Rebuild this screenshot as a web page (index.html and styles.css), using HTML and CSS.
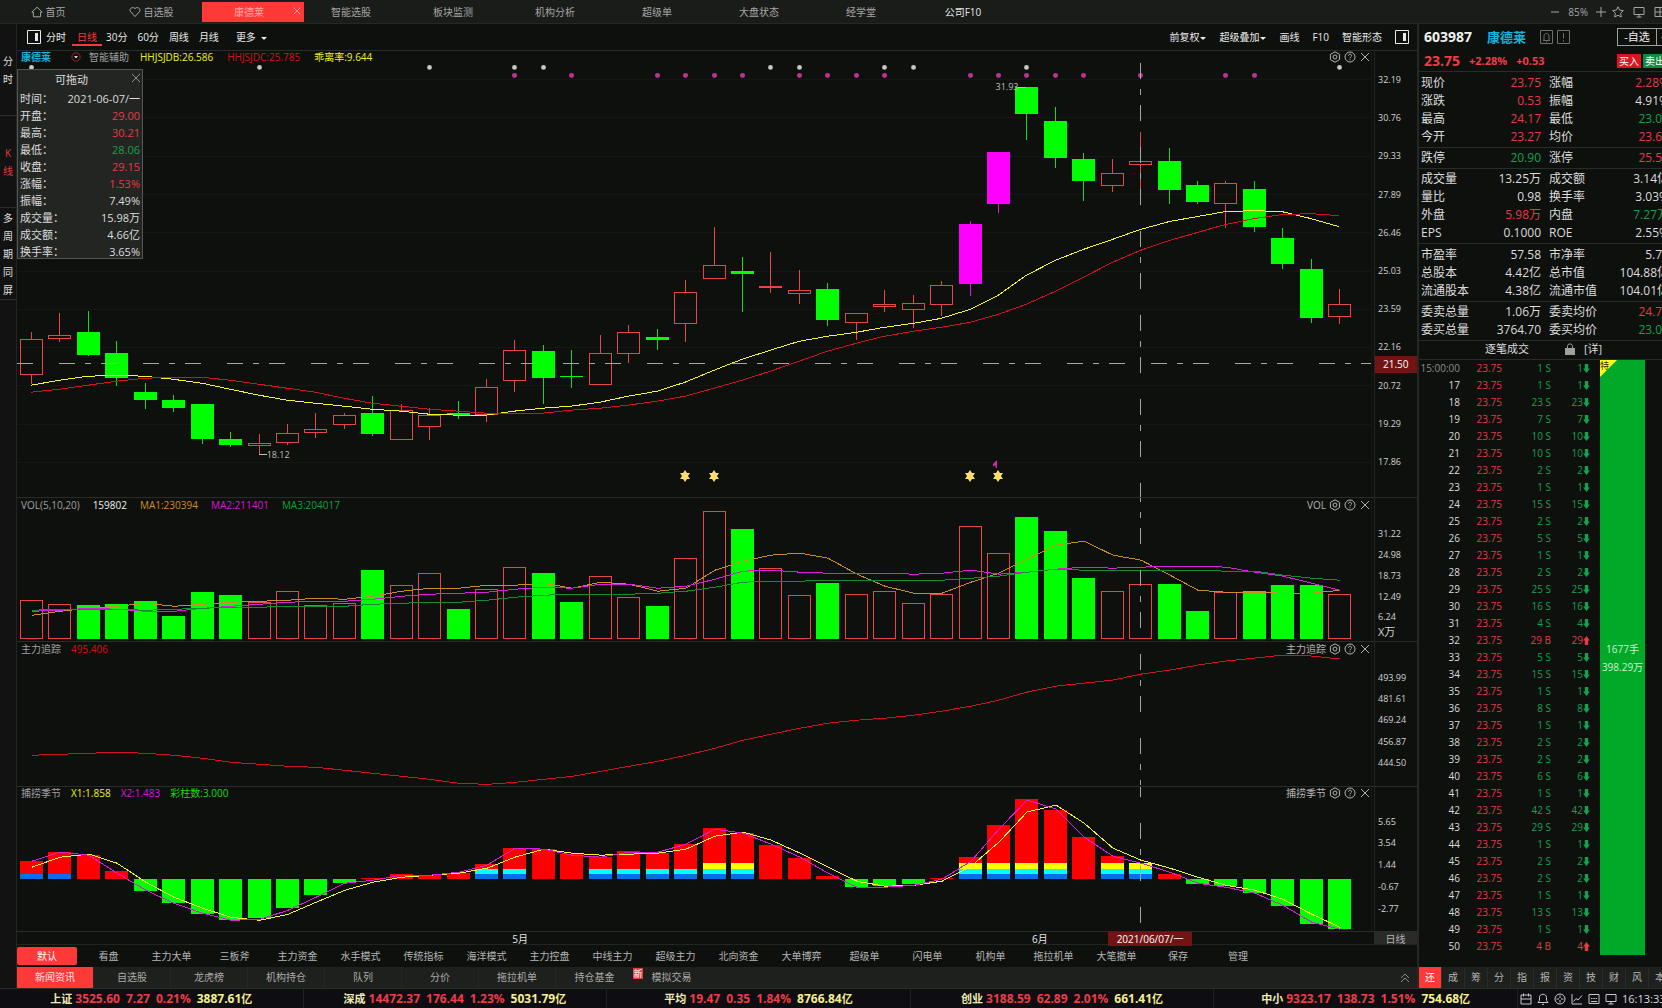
FILE: index.html
```html
<!DOCTYPE html>
<html lang="zh-CN">
<head>
<meta charset="utf-8">
<title>康德莱 603987</title>
<link rel="stylesheet" href="styles.css">
</head>
<body>
<svg class="sprite" aria-hidden="true">
  <symbol id="i-gear" viewBox="0 0 12 12"><path d="M6 .8 10.6 3.4V8.6L6 11.2 1.4 8.6V3.4Z"/><circle cx="6" cy="6" r="2"/></symbol>
  <symbol id="i-help" viewBox="0 0 12 12"><circle cx="6" cy="6" r="5"/><path d="M4.4 4.7C4.4 2.7 7.6 2.7 7.6 4.6 7.6 5.8 6 5.8 6 7.2M6 8.2V9.2"/></symbol>
  <symbol id="i-close" viewBox="0 0 12 12"><path d="M2 2 10 10M10 2 2 10"/></symbol>
  <symbol id="i-layout" viewBox="0 0 14 14"><path d="M.5.5H13.5V13.5H.5Z"/><path class="solid" d="M8 3H11V11H8Z"/></symbol>
</svg>

<div class="app">
  <header class="topbar">
    <nav class="top-tabs">
      <a class="top-tab first" href="#"><svg class="ico" viewBox="0 0 12 12"><path d="M.8 6.2 6 1.2 11.2 6.2H9.6V10.8H2.4V6.2Z"/></svg>首页</a>
      <a class="top-tab second" href="#"><svg class="ico" viewBox="0 0 12 12"><path d="M6 10.6 1.2 5.2C.2 2 3.8.4 6 2.6 8.2.4 11.8 2 10.8 5.2Z"/></svg>自选股</a>
      <a class="top-tab active" href="#">康德莱<svg class="ico tab-close"><use href="#i-close"/></svg></a>
      <a class="top-tab" href="#">智能选股</a>
      <a class="top-tab" href="#">板块监测</a>
      <a class="top-tab" href="#">机构分析</a>
      <a class="top-tab" href="#">超级单</a>
      <a class="top-tab" href="#">大盘状态</a>
      <a class="top-tab" href="#">经学堂</a>
      <a class="top-tab bright" href="#">公司F10</a>
    </nav>
    <div class="top-tools">
      <button type="button" aria-label="缩小"><svg class="ico" viewBox="0 0 12 12"><path d="M2 6H10"/></svg></button>
      <span class="zoom">85%</span>
      <button type="button" aria-label="放大"><svg class="ico" viewBox="0 0 12 12"><path d="M1 6H11M6 1V11"/></svg></button>
      <button type="button" aria-label="收藏"><svg class="ico" viewBox="0 0 12 12"><path d="M6 .8 7.6 4.1 11.3 4.6 8.6 7.2 9.3 11 6 9.2 2.7 11 3.4 7.2.7 4.6 4.4 4.1Z"/></svg></button>
      <button type="button" class="spaced" aria-label="屏幕"><svg class="ico" viewBox="0 0 12 12"><path d="M1 1.5H11V8.5H1ZM6 8.5V11M3.5 11H8.5"/></svg></button>
      <button type="button" class="spaced" aria-label="布局"><svg class="ico" viewBox="0 0 12 12"><path d="M1 1.5H11V10.5H1ZM6 1.5V10.5M1 6H11"/></svg></button>
    </div>
  </header>

  <div class="workspace">
    <nav class="side">
      <a class="side-group" href="#"><span>分</span><span>时</span></a>
      <a class="side-group on" href="#"><span>K</span><span>线</span></a>
      <a class="side-group" href="#"><span>多</span><span>周</span><span>期</span><span>同</span><span>屏</span></a>
    </nav>

    <main class="center">
      <div class="toolbar">
        <button type="button" class="layout" aria-label="左栏"><svg class="ico big"><use href="#i-layout"/></svg></button>
        <button type="button">分时</button>
        <button type="button" class="on">日线</button>
        <button type="button">30分</button>
        <button type="button">60分</button>
        <button type="button">周线</button>
        <button type="button">月线</button>
        <button type="button" class="more">更多<i class="caret wide"></i></button>
        <span class="grow"></span>
        <button type="button" class="r">前复权<i class="caret"></i></button>
        <button type="button" class="r">超级叠加<i class="caret"></i></button>
        <button type="button" class="r">画线</button>
        <button type="button" class="r">F10</button>
        <button type="button" class="r">智能形态</button>
        <button type="button" class="r last" aria-label="右栏"><svg class="ico big"><use href="#i-layout"/></svg></button>
      </div>

      <div class="charts">
        <section class="pane price">
          <div class="plot"><svg id="price" class="chart" viewBox="17 50 1357 447" preserveAspectRatio="none"></svg>
            <div class="legend">
              <span class="c-cyan name">康德莱</span>
              <svg class="ico drop" viewBox="0 0 12 12"><circle cx="6" cy="6" r="5"/><path class="tri" d="M3.500 5H8.500L6 7.500Z"/></svg>
              <span class="assist">智能辅助</span>
              <span class="c-yellow">HHJSJDB:26.586</span>
              <span class="c-red">HHJSJDC:25.785</span>
              <span class="c-yellow">乖离率:9.644</span>
            </div>
            <div class="pane-tools"><button type="button" aria-label="设置"><svg class="ico"><use href="#i-gear"/></svg></button><button type="button" aria-label="帮助"><svg class="ico"><use href="#i-help"/></svg></button><button type="button" aria-label="关闭"><svg class="ico"><use href="#i-close"/></svg></button></div>
            <span class="mark high">31.93</span>
            <span class="mark low">18.12</span>
            <div class="tip">
              <div class="tip-title">可拖动<button type="button" aria-label="关闭"><svg class="ico"><use href="#i-close"/></svg></button></div>
              <dl>
                <div><dt>时间：</dt><dd>2021-06-07/一</dd></div>
                <div><dt>开盘：</dt><dd class="up">29.00</dd></div>
                <div><dt>最高：</dt><dd class="up">30.21</dd></div>
                <div><dt>最低：</dt><dd class="down">28.06</dd></div>
                <div><dt>收盘：</dt><dd class="up">29.15</dd></div>
                <div><dt>涨幅：</dt><dd class="up">1.53%</dd></div>
                <div><dt>振幅：</dt><dd>7.49%</dd></div>
                <div><dt>成交量：</dt><dd>15.98万</dd></div>
                <div><dt>成交额：</dt><dd>4.66亿</dd></div>
                <div><dt>换手率：</dt><dd>3.65%</dd></div>
              </dl>
            </div>
          </div>
          <div class="axis"><span>32.19</span><span>30.76</span><span>29.33</span><span>27.89</span><span>26.46</span><span>25.03</span><span>23.59</span><span>22.16</span><span>20.72</span><span>19.29</span><span>17.86</span><b class="cursor-price">21.50</b></div>
        </section>

        <section class="pane vol">
          <div class="plot"><svg id="vol" class="chart" viewBox="17 498 1357 143" preserveAspectRatio="none"></svg>
            <div class="legend"><span>VOL(5,10,20)</span><span class="c-white">159802</span><span class="c-orange">MA1:230394</span><span class="c-magenta">MA2:211401</span><span class="c-green">MA3:204017</span></div>
            <div class="pane-tools"><span>VOL</span><button type="button" aria-label="设置"><svg class="ico"><use href="#i-gear"/></svg></button><button type="button" aria-label="帮助"><svg class="ico"><use href="#i-help"/></svg></button><button type="button" aria-label="关闭"><svg class="ico"><use href="#i-close"/></svg></button></div>
          </div>
          <div class="axis"><span>31.22</span><span>24.98</span><span>18.73</span><span>12.49</span><span>6.24</span><em>X万</em></div>
        </section>

        <section class="pane track">
          <div class="plot"><svg id="track" class="chart" viewBox="17 642 1357 143" preserveAspectRatio="none"></svg>
            <div class="legend"><span>主力追踪</span><span class="c-red">495.406</span></div>
            <div class="pane-tools"><span>主力追踪</span><button type="button" aria-label="设置"><svg class="ico"><use href="#i-gear"/></svg></button><button type="button" aria-label="帮助"><svg class="ico"><use href="#i-help"/></svg></button><button type="button" aria-label="关闭"><svg class="ico"><use href="#i-close"/></svg></button></div>
          </div>
          <div class="axis"><span>493.99</span><span>481.61</span><span>469.24</span><span>456.87</span><span>444.50</span></div>
        </section>

        <section class="pane season">
          <div class="plot"><svg id="season" class="chart" viewBox="17 787 1357 144" preserveAspectRatio="none"></svg>
            <div class="legend"><span>捕捞季节</span><span class="c-yellow">X1:1.858</span><span class="c-magenta">X2:1.483</span><span class="c-lime">彩柱数:3.000</span></div>
            <div class="pane-tools"><span>捕捞季节</span><button type="button" aria-label="设置"><svg class="ico"><use href="#i-gear"/></svg></button><button type="button" aria-label="帮助"><svg class="ico"><use href="#i-help"/></svg></button><button type="button" aria-label="关闭"><svg class="ico"><use href="#i-close"/></svg></button></div>
          </div>
          <div class="axis"><span>5.65</span><span>3.54</span><span>1.44</span><span>-0.67</span><span>-2.77</span></div>
        </section>
      </div>

      <div class="dates">
        <div class="date-track"><span class="may">5月</span><span class="jun">6月</span><b class="cursor-date">2021/06/07/一</b></div>
        <span class="period">日线</span>
      </div>

      <nav class="presets">
        <button type="button" class="on">默认</button><button type="button">看盘</button><button type="button">主力大单</button><button type="button">三板斧</button><button type="button">主力资金</button><button type="button">水手模式</button><button type="button">传统指标</button><button type="button">海洋模式</button><button type="button">主力控盘</button><button type="button">中线主力</button><button type="button">超级主力</button><button type="button">北向资金</button><button type="button">大单博弈</button><button type="button">超级单</button><button type="button">闪电单</button><button type="button">机构单</button><button type="button">拖拉机单</button><button type="button">大笔撤单</button><button type="button" class="short">保存</button><button type="button" class="short">管理</button>
      </nav>

      <nav class="news">
        <a class="on" href="#">新闻资讯</a><a href="#">自选股</a><a href="#">龙虎榜</a><a href="#">机构持仓</a><a href="#">队列</a><a href="#">分价</a><a href="#">拖拉机单</a><a href="#">持仓基金</a><a href="#"><sup class="new">新</sup>模拟交易</a>
        <button type="button" class="collapse" aria-label="展开"><svg class="ico" viewBox="0 0 12 12"><path d="M2 6 6 2 10 6M2 10 6 6 10 10"/></svg></button>
      </nav>
    </main>

    <aside class="quote">
      <div class="q-inner">
        <div class="q-head">
          <b class="code">603987</b><b class="c-cyan title">康德莱</b>
          <svg class="ico box" viewBox="0 0 13 14"><path d="M.5.5H12.5V13.5H.5ZM3 10.5H10M4 10.5V6C4 2.5 9 2.5 9 6V10.5M6 12H7"/></svg>
          <svg class="ico box" viewBox="0 0 13 14"><path d="M.5.5H12.5V13.5H.5ZM6.5 3V8.5M6.5 10V11.5"/></svg>
          <button type="button" class="fav">-自选</button><button type="button" class="fav arrow" aria-label="更多自选"><i class="caret"></i></button>
        </div>
        <div class="q-price">
          <b class="last-price">23.75</b><b>+2.28%</b><b>+0.53</b>
          <button type="button" class="buy">买入</button><button type="button" class="sell">卖出</button>
        </div>
        <table class="stats roomy"><tbody>
          <tr><th>现价</th><td class="up">23.75</td><th>涨幅</th><td class="up">2.28%</td></tr>
          <tr><th>涨跌</th><td class="up">0.53</td><th>振幅</th><td>4.91%</td></tr>
          <tr><th>最高</th><td class="up">24.17</td><th>最低</th><td class="down">23.03</td></tr>
          <tr><th>今开</th><td class="up">23.27</td><th>均价</th><td class="up">23.68</td></tr>
        </tbody></table>
        <table class="stats"><tbody>
          <tr><th>跌停</th><td class="down">20.90</td><th>涨停</th><td class="up">25.54</td></tr>
        </tbody></table>
        <table class="stats"><tbody>
          <tr><th>成交量</th><td>13.25万</td><th>成交额</th><td>3.14亿</td></tr>
          <tr><th>量比</th><td>0.98</td><th>换手率</th><td>3.03%</td></tr>
          <tr><th>外盘</th><td class="up">5.98万</td><th>内盘</th><td class="down">7.27万</td></tr>
          <tr><th>EPS</th><td>0.1000</td><th>ROE</th><td>2.55%</td></tr>
        </tbody></table>
        <table class="stats roomy"><tbody>
          <tr><th>市盈率</th><td>57.58</td><th>市净率</th><td>5.73</td></tr>
          <tr><th>总股本</th><td>4.42亿</td><th>总市值</th><td>104.88亿</td></tr>
          <tr><th>流通股本</th><td>4.38亿</td><th>流通市值</th><td>104.01亿</td></tr>
        </tbody></table>
        <table class="stats"><tbody>
          <tr><th>委卖总量</th><td>1.06万</td><th>委卖均价</th><td class="up">24.72</td></tr>
          <tr><th>委买总量</th><td>3764.70</td><th>委买均价</th><td class="down">23.05</td></tr>
        </tbody></table>
        <div class="tick-head"><span>逐笔成交</span><svg class="lock" viewBox="0 0 10 12"><path class="solid" d="M0 5H10V12H0Z"/><path d="M2.5 5V3.2C2.5.2 7.5.2 7.5 3.2V5"/></svg><a href="#">[详]</a></div>
        <div class="ticks">
          <table class="trades"><tbody id="trades"></tbody></table>
          <div class="bar"><span class="flag">特</span><div>1677手</div><div>398.29万</div></div>
        </div>
        <nav class="q-tabs"><a class="on" href="#">还</a><a href="#">成</a><a href="#">筹</a><a href="#">分</a><a href="#">指</a><a href="#">报</a><a href="#">资</a><a href="#">技</a><a href="#">财</a><a href="#">风</a><a href="#">本</a></nav>
      </div>
    </aside>
  </div>

  <footer class="status">
    <div class="idx"><span>上证</span><b>3525.60</b><b>7.27</b><b>0.21%</b><b class="amt">3887.61<small>亿</small></b></div>
    <div class="idx"><span>深成</span><b>14472.37</b><b>176.44</b><b>1.23%</b><b class="amt">5031.79<small>亿</small></b></div>
    <div class="idx"><span>平均</span><b>19.47</b><b>0.35</b><b>1.84%</b><b class="amt">8766.84<small>亿</small></b></div>
    <div class="idx"><span>创业</span><b>3188.59</b><b>62.89</b><b>2.01%</b><b class="amt">661.41<small>亿</small></b></div>
    <div class="idx"><span>中小</span><b>9323.17</b><b>138.73</b><b>1.51%</b><b class="amt">754.68<small>亿</small></b></div>
    <div class="sys">
      <svg class="ico" viewBox="0 0 12 12"><path d="M1 2H11V11H1ZM1 6H11M3.5.5V3.5M8.5.5V3.5"/></svg>
      <svg class="ico" viewBox="0 0 12 12"><path d="M1 9.5H11L9.5 7.5V4.5C9.5.2 2.5.2 2.5 4.5V7.5ZM5 11.3H7"/></svg>
      <svg class="ico" viewBox="0 0 12 12"><circle cx="6" cy="6" r="5"/><path d="M6 2.5V5M6 7V9.5M2.5 6H5M7 6H9.5"/></svg>
      <svg class="ico" viewBox="0 0 12 12"><path d="M1 1V11H11M2.5 8.5 5 5.5 7 7 11 2.5"/></svg>
      <svg class="ico" viewBox="0 0 12 12"><path d="M1 1.5H11V10.5H1ZM3 5.5H4.5M5.3 5.5H6.8M7.6 5.5H9M3 8.5H9"/></svg>
      <svg class="ico" viewBox="0 0 12 12"><path d="M1 1.5H11V8.5H1ZM6 8.5V11M3.5 11H8.5"/></svg>
      <time>16:13:33</time>
    </div>
  </footer>
</div>
<script src="chart.js"></script>
</body>
</html>
```
FILE: styles.css
```css
* { box-sizing: border-box; }
html, body { margin: 0; background: #0e100e; }
body {
  font: 10px/14px "Open Sans", "Noto Sans CJK SC", sans-serif;
  color: #c8c8c8;
}
a { color: inherit; text-decoration: none; }
button { font: inherit; color: inherit; background: none; border: 0; padding: 0; margin: 0; white-space: nowrap; }
dl, dd, dt { margin: 0; }

.sprite { display: none; }
.ico { width: 12px; height: 12px; fill: none; stroke: currentColor; stroke-width: 1; display: block; flex: none; }
.solid { fill: currentColor; stroke: none; }
.ico.big { width: 14px; height: 14px; stroke-width: 1; }
.grow { flex: 1; }
.caret { display: inline-block; border: 3px solid transparent; border-top-color: currentColor; border-bottom: 0; vertical-align: middle; margin-left: 1px; }
.caret.wide { margin-left: 5px; }

.up { color: #e23c46; }
.down { color: #14a04e; }
.c-cyan { color: #14b4dc; }
.c-yellow { color: #f0f01e; }
.c-red { color: #d21414; }
.c-white { color: #f0f0f0; }
.c-orange { color: #d28c28; }
.c-magenta { color: #dc14dc; }
.c-green { color: #14a03c; }
.c-lime { color: #14dc14; }

.app { display: flex; flex-direction: column; min-height: 100vh; overflow: hidden; }

/* top bar */
.topbar { display: flex; height: 24px; flex: none; background: #1a1c19; border-bottom: 1px solid #262825; color: #a5a5a5; }
.top-tabs { display: flex; }
.top-tab { width: 102px; height: 24px; display: flex; align-items: center; justify-content: center; gap: 3px; position: relative; }
.top-tab.first { width: 96px; }
.top-tab.second { padding-left: 8px; }
.top-tab.active { height: 20px; margin: 2px -4px 0 4px; padding-right: 8px; background: #ff3838; color: #ffaca8; }
.top-tab.bright { color: #e6e6e6; }
.tab-close { position: absolute; right: 2px; top: 4px; width: 10px; height: 10px; }
.top-tools { display: flex; align-items: center; gap: 5px; margin-left: auto; margin-right: -4px; }
.top-tools .zoom { margin: 0 2px; }
.top-tools .spaced { margin-left: 4px; }

.workspace { display: flex; flex: 1; min-height: 0; }

/* left strip */
.side { width: 17px; flex: none; background: #111211; border-right: 1px solid #232522; color: #e0e0e0; }
.side-group { height: 92px; display: flex; flex-direction: column; justify-content: center; align-items: center; gap: 4px; border-bottom: 1px solid #2a2c29; }
.side-group.on { color: #e23c46; }

.center { flex: 1; min-width: 0; display: flex; flex-direction: column; }

/* toolbar */
.toolbar { display: flex; align-items: center; height: 26px; flex: none; padding: 0 8px 0 10px; color: #eaeaea; gap: 10px; }
.toolbar .layout { margin-right: -5px; }
.toolbar .on { color: #f03c3c; border-bottom: 2px solid #f03c3c; padding: 2px 5px 0; margin: 0 -6px 0 -4px; }
.toolbar .more { margin-left: 7px; }
.toolbar .r { margin-left: 3px; }

/* chart panes */
.charts { flex: 1; display: flex; flex-direction: column; min-height: 600px; }
.pane { display: flex; border-top: 1px solid #2a2c29; min-height: 0; }
.price { flex: 448 1 0; }
.vol { flex: 144 1 0; }
.track { flex: 144 1 0; }
.season { flex: 145 1 0; }
.plot { flex: 1; min-width: 0; position: relative; }
.chart { position: absolute; inset: 0; width: 100%; height: 100%; display: block; }
.legend { position: absolute; left: 4px; top: 0; display: flex; align-items: center; gap: 10px; height: 14px; color: #a0a0a0; white-space: nowrap; }
.price .legend { gap: 14px; height: 12px; }
.vol .legend { gap: 13px; }
.season .legend, .season .pane-tools, .price .pane-tools { height: 12px; }
.legend .name { font-weight: 700; margin-right: 6px; }
.drop { width: 10px; height: 10px; color: #b42828; }
.tri { fill: #ffffff; stroke: none; }
.assist { margin: 0 -3px 0 -6px; }
.pane-tools { position: absolute; right: 3px; top: 0; height: 14px; display: flex; align-items: center; gap: 3px; color: #b4b4b4; }
.axis { width: 43px; flex: none; border-left: 1px solid #232522; font-size: 9px; line-height: 12px; color: #d2d2d2; display: flex; flex-direction: column; justify-content: space-between; padding-left: 3px; position: relative; }
.price .axis { padding-top: 23px; padding-bottom: 29px; }
.vol .axis { padding-top: 30px; padding-bottom: 3px; }
.vol .axis em { font-style: normal; font-size: 11px; margin-top: -6px; }
.track .axis { padding-top: 30px; padding-bottom: 17px; }
.season .axis { padding-top: 29px; padding-bottom: 16px; }
.cursor-price { position: absolute; left: 0; right: 0; top: 307px; top: 68.4%; height: 17px; line-height: 17px; padding-left: 8px; font-size: 10px; font-weight: 400; background: #731414; color: #fff; }
.mark { position: absolute; font-size: 9px; line-height: 12px; color: #bebebe; }
.mark.high { right: 26.2%; top: 30px; }
.mark.low { left: 18.4%; bottom: 36px; }

/* floating readout */
.tip { position: absolute; left: 0; top: 18px; width: 126px; height: 190px; background: #232523; border: 1px solid #555; color: #dcdcdc; font-size: 11px; line-height: 17px; }
.tip-title { height: 20px; line-height: 20px; padding-left: 37px; position: relative; }
.tip-title button { position: absolute; right: 0; top: 2px; color: #8c8c8c; }
.tip-title .ico { display: block; }
.tip dl > div { display: flex; justify-content: space-between; padding: 0 2px; height: 17px; }

/* date line */
.dates { display: flex; height: 14px; flex: none; border-top: 1px solid #2a2c29; border-bottom: 1px solid #232522; line-height: 14px; }
.date-track { flex: 1; position: relative; color: #e6e6e6; }
.date-track span, .cursor-date { position: absolute; top: 0; }
.may { left: 36.5%; }
.jun { left: 74.8%; }
.cursor-date { left: 80.4%; width: 84px; text-align: center; background: #731414; font-weight: 400; color: #fff; }
.period { width: 43px; text-align: center; background: #2a2b29; color: #b4b4b4; }

/* preset and news tabs */
.presets { display: flex; align-items: center; height: 22px; flex: none; color: #b4b4b4; }
.presets button { width: 63px; height: 18px; }
.presets .on { width: 60px; background: #ff3838; color: #fff; border-radius: 2px; }
.presets .short { width: 60px; }
.news { display: flex; height: 21px; flex: none; background: #1e201d; color: #aaa; line-height: 21px; }
.news a { width: 77px; text-align: center; border-right: 1px solid #252724; position: relative; }
.news .on { background: #ff3838; color: #ffe4e4; }
.news a:nth-child(n+8) { border-right: 0; }
.new { position: absolute; left: 0; top: 1px; width: 10px; height: 11px; background: #e03c46; color: #fff; font-size: 9px; line-height: 11px; }
.collapse { margin-left: auto; margin-right: 6px; color: #8c8c8c; }

/* quote panel */
.quote { width: 245px; flex: none; border-left: 2px solid #262825; overflow: hidden; }
.q-inner { width: 252px; height: 100%; display: flex; flex-direction: column; }
.q-head { display: flex; align-items: center; height: 26px; padding-left: 5px; flex: none; }
.code { font-size: 14px; color: #f0f0f0; width: 63px; }
.title { font-size: 13px; width: 53px; }
.box { width: 13px; height: 14px; margin-right: 4px; color: #6e6e6e; }
.fav { width: 40px; height: 18px; border: 1px solid #a0a0a0; color: #f0f0f0; font-size: 11px; margin-left: auto; }
.fav.arrow { width: 14px; margin: 0; border-left: 0; }
.q-price { display: flex; align-items: center; gap: 9px; height: 22px; padding-left: 5px; border-bottom: 1px solid #2a2c29; color: #f03c46; font-size: 11px; flex: none; }
.last-price { font-size: 14px; }
.buy, .sell { width: 24px; height: 14px; line-height: 14px; color: #fff; background: #dc1420; font-size: 10px; }
.buy { margin-left: auto; }
.sell { background: #128c3c; margin: 0 4px 0 -7px; }
.stats { width: 100%; border-collapse: separate; border-spacing: 0; table-layout: fixed; padding: 1px 3px 1px 2px; border-bottom: 1px solid #2a2c29; font-size: 12px; color: #dcdcdc; flex: none; }
.stats.roomy { padding-top: 2px; }
.stats tr { height: 18px; }
.stats th, .stats td { padding: 0; line-height: 18px; white-space: nowrap; font-weight: 400; }
.stats th { text-align: left; width: 64px; }
.stats td { text-align: right; width: 56px; }
.stats th:nth-child(3) { padding-left: 8px; width: 72px; }
.tick-head { display: flex; align-items: center; height: 19px; flex: none; border-bottom: 1px solid #2a2c29; font-size: 11px; color: #dcdcdc; padding: 0 0 2px 66px; }
.tick-head span { width: 80px; }
.lock { width: 10px; height: 12px; fill: none; stroke: #a0a0a0; color: #a0a0a0; stroke-width: 1; margin-right: 9px; }
.ticks { display: flex; }
.trades { border-collapse: collapse; table-layout: fixed; width: 171px; color: #dcdcdc; }
.trades tr { height: 17px; }
.trades td { padding: 0; text-align: right; line-height: 17px; white-space: nowrap; }
.trades td:nth-child(1) { width: 41px; }
.trades td:nth-child(2) { width: 42px; }
.trades td:nth-child(3) { width: 49px; }
.trades .muted { color: #8c8c8c; }
.arr { display: inline-block; width: 7px; height: 9px; fill: currentColor; vertical-align: -1px; }
.bar { width: 45px; margin-left: 10px; background: #00aa28; color: #d2f0d2; display: flex; flex-direction: column; justify-content: center; align-items: center; gap: 4px; position: relative; white-space: nowrap; }
.flag { position: absolute; left: 0; top: 0; width: 17px; height: 17px; background: #ffff14; clip-path: polygon(0 0, 100% 0, 0 100%); color: #323200; font-size: 9px; line-height: 11px; }
.q-tabs { display: flex; margin-top: auto; height: 21px; line-height: 21px; background: #1e201d; color: #b4b4b4; flex: none; }
.q-tabs a { width: 23px; text-align: center; border-right: 1px solid #2a2c29; flex: none; }
.q-tabs .on { background: #ff3838; color: #fff; }

/* index strip */
.status { display: flex; height: 20px; flex: none; background: #0e0e12; border-top: 1px solid #2a2c29; }
.idx { flex: 1; display: flex; align-items: center; justify-content: center; gap: 6px; border-right: 1px solid #20222a; color: #f03c46; font-size: 12px; white-space: nowrap; }
.idx span { font-size: 11px; font-weight: 700; color: #f0ebb4; margin-right: -3px; }
.idx .amt { color: #f5f08c; }
.idx small { font-size: 11px; }
.sys { width: 144px; flex: none; display: flex; align-items: center; gap: 5px; color: #c8c8c8; padding-left: 2px; }
.sys time { font-size: 11px; color: #dcdcdc; }

/* chart parts */
.chart * { shape-rendering: crispEdges; vector-effect: non-scaling-stroke; }
.chart .grid { stroke: #151715; fill: none; }
.chart .rise { fill: none; stroke: #e64646; }
.chart .fall { fill: #00ff00; stroke: none; }
.chart .surge { fill: #ff00ff; stroke: none; }
.chart .w-rise { stroke: #e64646; }
.chart .w-fall { stroke: #14dc14; }
.chart .w-surge { stroke: #dc14dc; }
.chart .lead { stroke: #bebebe; }
.chart .red { fill: #ff0000; }
.chart .blue { fill: #0a6ee6; }
.chart .aqua { fill: #00ffff; }
.chart .gold { fill: #ffff00; }
.chart polyline { fill: none; }
.chart .cross { stroke: #a5a5a5; stroke-dasharray: 16 26 16 10 6 10; }
.chart .dot, .chart .star { shape-rendering: auto; }
.l-yellow { stroke: #f5f532; }
.l-red { stroke: #d21420; }
.l-orange { stroke: #c88c28; }
.l-magenta { stroke: #dc1edc; }
.l-green { stroke: #148c32; }
```
FILE: chart.js
```js
const NS = 'http://www.w3.org/2000/svg';
const STEP = 28.44, X0 = 31, HALF = 11;
const cx = i => Math.round(X0 + STEP * i);

function add(parent, tag, attrs) {
  const el = document.createElementNS(NS, tag);
  for (const k in attrs) el.setAttribute(k, attrs[k]);
  parent.appendChild(el);
  return el;
}
function line(svg, cls, x1, y1, x2, y2) { add(svg, 'line', { class: cls, x1, y1, x2, y2 }); }
function curve(svg, cls, ys, dx = 0) {
  add(svg, 'polyline', { class: cls, points: ys.map((y, i) => (cx(i) + dx) + ',' + y).join(' ') });
}
function hollow(svg, x, top, bottom) {
  add(svg, 'rect', { class: 'rise', x: x - HALF + .5, y: top + .5, width: 22, height: Math.max(bottom - top, 1) });
}
function solid(svg, cls, x, top, bottom) {
  add(svg, 'rect', { class: cls, x: x - HALF, y: top, width: 23, height: Math.max(bottom - top, 1) });
}

// [kind, high, body top, body bottom, low]
const candles = [
  ['r',332,339,374,384],['r',313,335,338,342],['g',311,332,355,356],['g',341,353,378,386],['g',383,392,400,409],
  ['g',395,400,408,412],['g',404,404,439,444],['g',432,439,445,447],['r',434,443,445,454],['r',424,433,442,445],
  ['r',413,429,432,438],['r',413,415,424,429],['g',396,413,434,436],['r',404,410,439,439],['r',408,415,426,440],
  ['g',401,413,415,419],['r',379,387,414,422],['r',340,350,380,392],['g',345,351,378,404],['g',350,376,377,388],
  ['r',335,353,384,384],['r',325,332,353,363],['g',329,337,340,350],['r',280,292,323,342],['r',226,264,278,278],
  ['g',256,271,274,312],['r',251,286,286,293],['r',270,290,293,304],['g',283,289,320,326],['r',313,313,322,340],
  ['r',290,304,306,312],['r',295,303,309,328],['r',281,285,304,316],['m',220,223,284,296],['m',151,151,203,212],
  ['g',86,86,113,139],['g',106,120,157,167],['g',152,158,180,200],['r',158,172,184,191],['r',131,160,163,189],
  ['g',147,160,189,203],['g',180,184,201,203],['r',180,182,202,227],['g',180,188,226,231],['g',227,237,263,269],
  ['g',258,269,318,323],['r',289,304,316,324]
];
const fast = [385,380,376,375,376,379,383,389,395,400,403,406,409,411,414,415,415,411,408,406,402,396,391,382,370,359,350,341,336,332,327,323,318,309,295,275,260,249,239,229,221,216,211,210,211,218,226];
const slow = [392,389,385,381,378,377,377,380,384,388,392,398,403,406,409,411,413,413,413,410,408,405,401,396,388,380,371,361,351,343,336,331,327,322,314,304,291,277,262,250,240,232,224,218,214,213,215];

const volTops = [600,604,605,604,601,616,592,595,602,591,605,603,570,585,573,609,589,567,573,602,576,597,606,558,511,529,568,595,583,594,591,603,594,526,553,517,531,578,591,584,584,611,592,591,585,585,594];
const ma1 = [615,611,608,606,603,606,604,602,601,600,598,599,596,591,588,588,585,585,583,588,582,584,591,588,570,561,555,553,558,574,586,593,593,582,573,559,545,541,555,560,575,590,592,592,593,593,590];
const ma2 = [611,610,608,609,611,611,608,606,604,602,601,601,599,596,594,593,592,589,587,588,584,584,588,586,579,571,570,572,573,573,573,574,573,570,574,572,569,567,568,567,566,566,567,572,576,583,590];
const ma3 = [610,609,609,609,610,609,608,607,607,606,606,606,604,603,602,602,600,597,595,594,594,594,593,591,587,582,581,581,580,580,580,580,580,578,576,572,569,570,570,570,570,570,571,571,575,578,580];
const force = [755,754,753,752,753,755,758,762,764,766,767,770,773,776,779,783,784,782,779,776,771,766,761,755,748,740,734,728,723,720,718,715,711,706,700,692,686,683,680,674,670,665,661,658,655,656,659];

const ends = [861,852,855,871,891,903,914,920,918,908,895,883,878,874,875,873,864,848,849,854,857,851,853,844,828,833,845,858,876,887,886,884,878,857,825,799,810,837,856,863,874,884,886,893,906,924,929];
const layers = {0:1,1:1,16:2,17:2,20:2,21:2,22:2,23:2,24:3,25:3,33:3,34:3,35:3,36:3,38:3,39:3};
const x1 = [867,857,854,863,882,897,908,917,920,914,902,890,882,877,875,873,868,857,849,853,855,854,853,849,836,832,840,853,867,881,886,885,881,866,842,812,805,823,848,860,868,877,885,890,899,914,927];
const x2 = [861,852,855,873,890,903,913,920,919,910,897,883,880,875,875,872,865,848,849,855,857,852,852,844,829,833,844,857,873,887,887,885,879,861,829,800,809,837,856,863,872,883,887,893,905,922,929];

const price = document.getElementById('price');
for (let k = 0; k < 11; k++) line(price, 'grid', 17, Math.round(79 + k * 38.3), 1371, Math.round(79 + k * 38.3));
candles.forEach(([kind, hi, top, bottom, lo], i) => {
  const x = cx(i), m = x + .5;
  const name = { r: 'rise', g: 'fall', m: 'surge' }[kind];
  if (hi < top) line(price, 'w-' + name, m, hi, m, top);
  if (lo > bottom) line(price, 'w-' + name, m, bottom, m, lo);
  if (kind === 'r') hollow(price, x, top, bottom); else solid(price, name, x, top, bottom);
});
curve(price, 'l-yellow', fast);
curve(price, 'l-red', slow);
line(price, 'lead', 259, 454, 267, 454);
line(price, 'lead', 1018, 87, 1026, 87);
[0,8,14,17,18,26,27,30,31,35,46].forEach(i => add(price, 'circle', { class: 'dot', cx: cx(i) + .5, cy: 66.5, r: 2.4, fill: '#c8c8c8' }));
[17,19,22,23,24,25,27,28,29,30,33,34,35,36,37,39,42,43].forEach(i => add(price, 'circle', { class: 'dot', cx: cx(i) + .5, cy: 74.5, r: 2.5, fill: '#be3296' }));
[23,24,33,34].forEach(i => {
  const x = cx(i);
  add(price, 'path', { class: 'star', fill: '#ffdc6e', d: `M${x} 470l2 3h3l-2 3 2 3h-3l-2 3-2-3h-3l2-3-2-3h3z` });
});
add(price, 'path', { class: 'star', fill: '#d228a0', d: 'M997 460v8h-1l-1-3-2 2v-3z' });

const vol = document.getElementById('vol');
volTops.forEach((top, i) => {
  if (candles[i][0] === 'g') solid(vol, 'fall', cx(i), top, 639); else hollow(vol, cx(i), top, 638);
});
curve(vol, 'l-orange', ma1, 1);
curve(vol, 'l-magenta', ma2, 1);
curve(vol, 'l-green', ma3, 1);

curve(document.getElementById('track'), 'l-red', force, 1);

const season = document.getElementById('season');
ends.forEach((y, i) => {
  const x = cx(i);
  if (y > 879) { solid(season, 'fall', x, 879, y); return; }
  solid(season, 'red', x, y, 879);
  if (layers[i] > 2) solid(season, 'gold', x, 863, 869);
  if (layers[i] > 1) solid(season, 'aqua', x, 869, 874);
  if (layers[i]) solid(season, 'blue', x, 874, 879);
});
curve(season, 'l-yellow', x1, 1);
curve(season, 'l-magenta', x2, 1);

// crosshair
line(price, 'cross', 17, 363.5, 1371, 363.5);
const offsets = { price: [62, 42], vol: [498, 54], track: [642, 30], season: [787, 6] };
for (const id in offsets) {
  const svg = document.getElementById(id);
  const v = svg.viewBox.baseVal;
  add(svg, 'line', { class: 'cross', x1: 1140.5, x2: 1140.5, y1: offsets[id][0], y2: v.y + v.height, 'stroke-dashoffset': offsets[id][1] });
  add(svg, 'line', { class: 'grid', x1: 1371.5, x2: 1371.5, y1: v.y, y2: v.y + v.height });
}

// trade list
const lots = [1,1,23,7,10,10,2,1,15,2,5,1,2,25,16,4,29,5,15,1,8,1,2,2,6,1,42,29,1,2,2,1,13,1,4];
document.getElementById('trades').innerHTML = lots.map((n, i) => {
  const buy = i === 16 || i === 34;
  const cls = buy ? 'up' : 'down';
  const d = buy ? 'M3 0 6 4H4.5V8H1.5V4H0Z' : 'M3 8 6 4H4.5V0H1.5V4H0Z';
  return `<tr><td${i ? '' : ' class="muted"'}>${i ? i + 16 : '15:00:00'}</td><td class="up">23.75</td><td class="${cls}">${n} ${buy ? 'B' : 'S'}</td><td class="${cls}">${n}<svg class="arr" viewBox="0 0 6 8"><path d="${d}"/></svg></td></tr>`;
}).join('');
```
